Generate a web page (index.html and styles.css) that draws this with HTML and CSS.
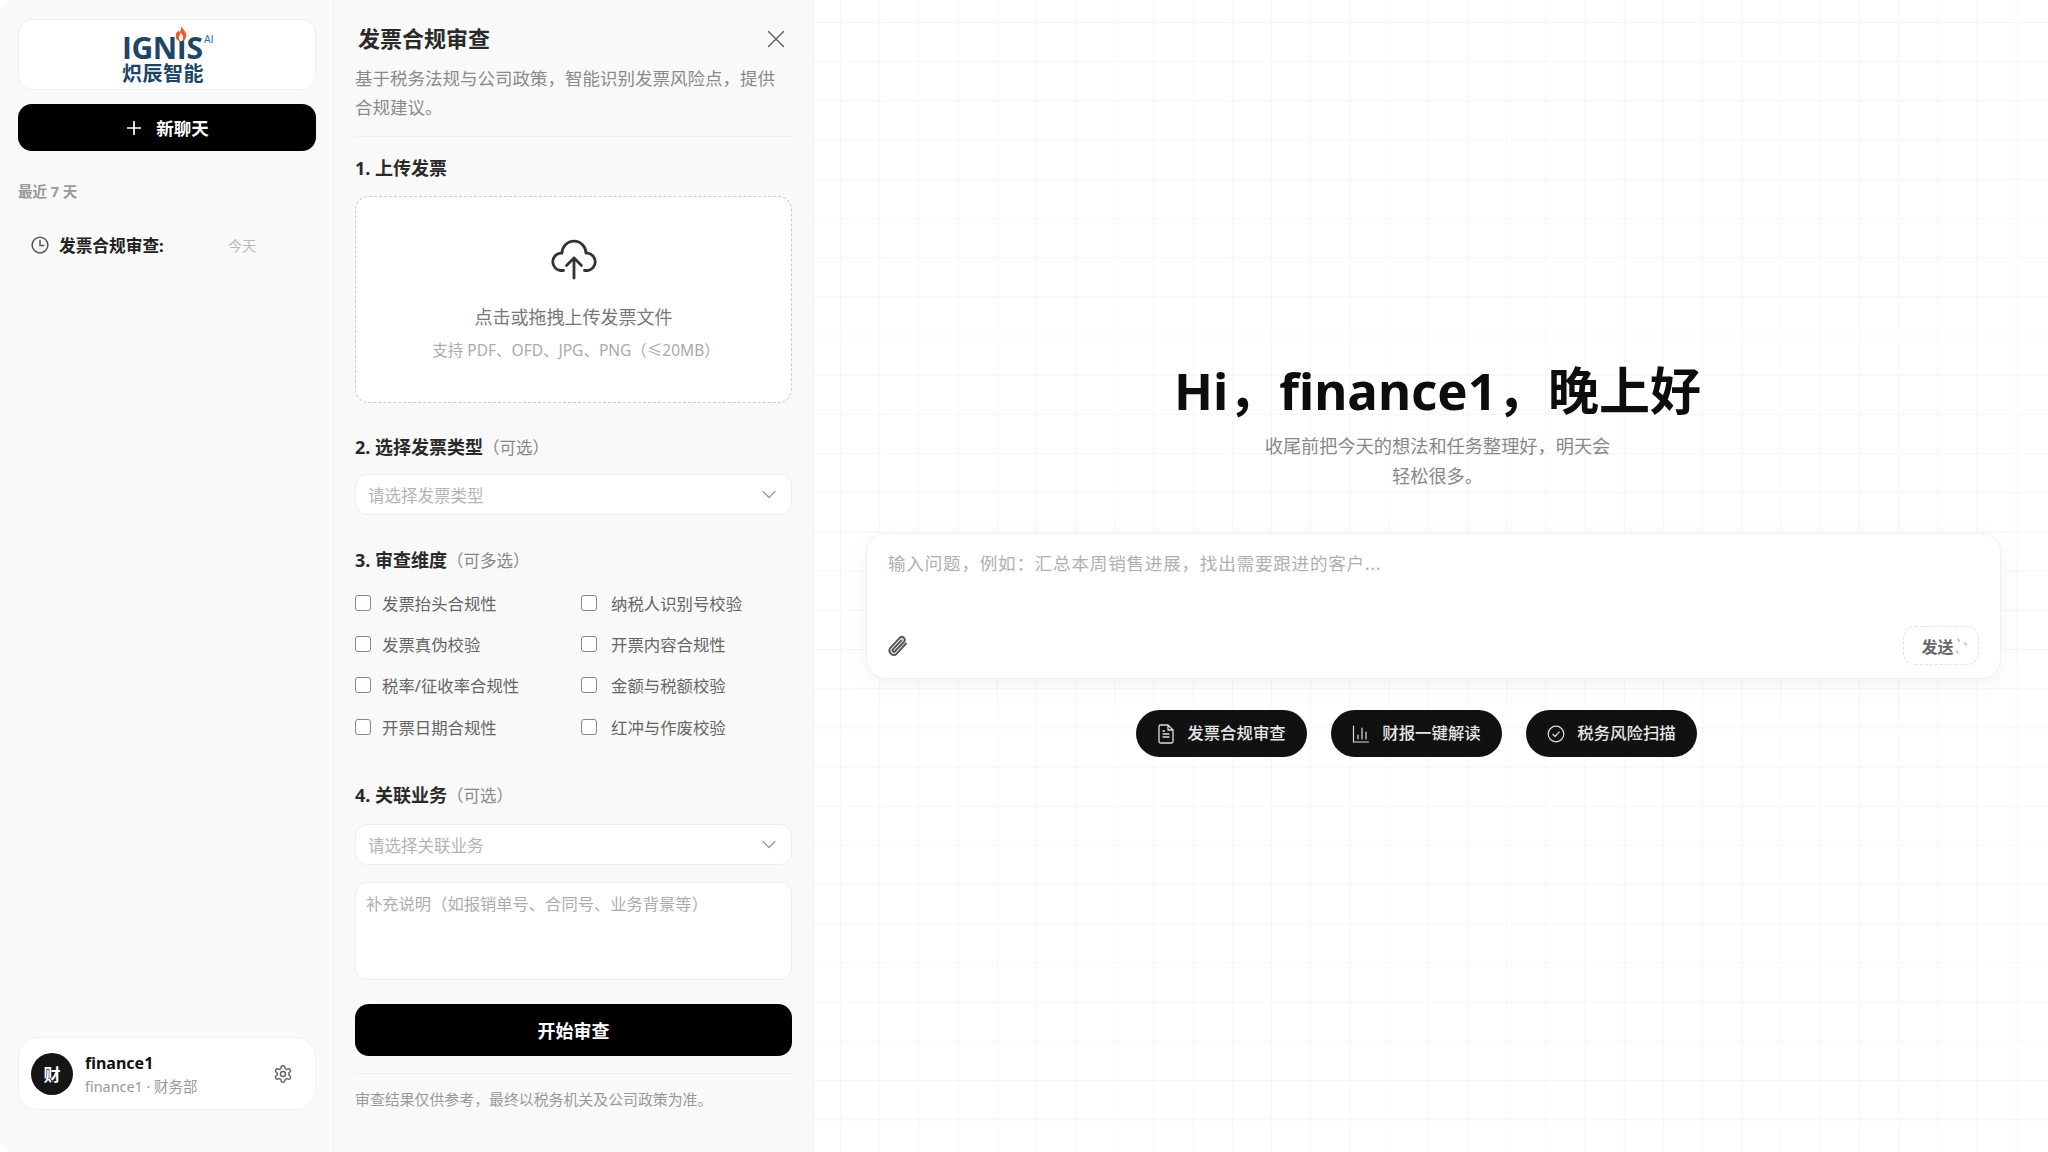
FILE: index.html
```html
<!DOCTYPE html>
<html lang="zh-CN">
<head>
    <meta charset="UTF-8">
    <title>IGNIS 炽辰智能</title>
    <link rel="stylesheet" href="styles.css">
</head>
<body>

    <aside class="sidebar">
        <div class="logo-card">
            <div class="logo">
                <div class="logo-en">IGNIS<span class="logo-ai">AI</span></div>
                <svg class="logo-flame" viewBox="0 0 14 20"><path fill="#ee5a24" d="M7 0c1 3 5 5 6 9 1 5-2 9-6 9S0 15 1 10c.5-2 2-3 2.500-5 1 1 1.500 2 1.500 3C6.500 6 7.500 3 7 0z"/><path fill="#fff" d="M7 8c1 2 2.500 3 2.500 5.500S8.200 18 7 18s-2.500-2-2.500-4.500S6 10 7 8z"/></svg>
                <div class="logo-cn">炽辰智能</div>
            </div>
        </div>
        <button class="new-chat">
            <svg width="18" height="18" viewBox="0 0 18 18" fill="none" stroke="#fff" stroke-width="1.700"><path d="M9 2v14M2 9h14"/></svg>
            <span>新聊天</span>
        </button>
        <div class="recent-label">最近 7 天</div>
        <div class="history-item">
            <svg width="18" height="18" viewBox="0 0 24 24" fill="none" stroke="#555" stroke-width="2" stroke-linecap="round"><circle cx="12" cy="12" r="10.500"/><path d="M12 6v6.500h5"/></svg>
            <span class="history-title">发票合规审查:</span>
            <span class="history-time">今天</span>
        </div>
        <div class="user-card">
            <div class="avatar">财</div>
            <div class="user-info">
                <div class="user-name">finance1</div>
                <div class="user-dept">finance1 · 财务部</div>
            </div>
            <svg width="20" height="20" viewBox="0 0 24 24" fill="none" stroke="#666" stroke-width="1.800" stroke-linecap="round" stroke-linejoin="round"><path d="M12.220 2h-.44a2 2 0 0 0-2 2v.18a2 2 0 0 1-1 1.730l-.43.25a2 2 0 0 1-2 0l-.15-.08a2 2 0 0 0-2.730.73l-.22.38a2 2 0 0 0 .73 2.730l.15.1a2 2 0 0 1 1 1.720v.51a2 2 0 0 1-1 1.740l-.15.09a2 2 0 0 0-.73 2.730l.22.38a2 2 0 0 0 2.730.73l.15-.08a2 2 0 0 1 2 0l.43.25a2 2 0 0 1 1 1.730V20a2 2 0 0 0 2 2h.44a2 2 0 0 0 2-2v-.18a2 2 0 0 1 1-1.730l.43-.25a2 2 0 0 1 2 0l.15.08a2 2 0 0 0 2.730-.73l.22-.39a2 2 0 0 0-.73-2.730l-.15-.08a2 2 0 0 1-1-1.740v-.5a2 2 0 0 1 1-1.740l.15-.09a2 2 0 0 0 .73-2.730l-.22-.38a2 2 0 0 0-2.730-.73l-.15.08a2 2 0 0 1-2 0l-.43-.25a2 2 0 0 1-1-1.730V4a2 2 0 0 0-2-2z"/><circle cx="12" cy="12" r="3"/></svg>
        </div>
    </aside>

    <section class="panel">
        <div class="panel-head">
            <h2>发票合规审查</h2>
            <svg width="18" height="18" viewBox="0 0 18 18" fill="none" stroke="#666" stroke-width="1.500" stroke-linecap="round"><path d="M1.500 1.500l15 15M16.500 1.500l-15 15"/></svg>
        </div>
        <p class="panel-desc">基于税务法规与公司政策，智能识别发票风险点，提供合规建议。</p>
        <div class="divider"></div>

        <div class="field-label first">1. 上传发票</div>
        <div class="upload-box">
            <svg width="48" height="42" viewBox="0 0 48 42" fill="none" stroke="#333" stroke-width="2.800" stroke-linecap="round" stroke-linejoin="round"><path d="M13.500 32.500H10.500A8.700 8.700 0 0 1 10.500 15.200H12A11.900 11.900 0 0 1 36 15.200H37.500A8.700 8.700 0 0 1 37.500 32.500H34.500"/><path d="M24 40V20M16.500 27.500L24 20l7.500 7.500"/></svg>
            <div class="upload-title">点击或拖拽上传发票文件</div>
            <div class="upload-hint">支持 PDF、OFD、JPG、PNG（≤20MB）</div>
        </div>

        <div class="field-label">2. 选择发票类型<span class="optional">（可选）</span></div>
        <div class="select">
            <span>请选择发票类型</span>
            <svg width="14" height="9" viewBox="0 0 14 9" fill="none" stroke="#999" stroke-width="1.300" stroke-linecap="round" stroke-linejoin="round"><path d="M1 1.500l6 6 6-6"/></svg>
        </div>

        <div class="field-label">3. 审查维度<span class="optional">（可多选）</span></div>
        <div class="check-grid">
            <label class="check"><input type="checkbox">发票抬头合规性</label>
            <label class="check"><input type="checkbox">纳税人识别号校验</label>
            <label class="check"><input type="checkbox">发票真伪校验</label>
            <label class="check"><input type="checkbox">开票内容合规性</label>
            <label class="check"><input type="checkbox">税率/征收率合规性</label>
            <label class="check"><input type="checkbox">金额与税额校验</label>
            <label class="check"><input type="checkbox">开票日期合规性</label>
            <label class="check"><input type="checkbox">红冲与作废校验</label>
        </div>

        <div class="field-label">4. 关联业务<span class="optional">（可选）</span></div>
        <div class="select">
            <span>请选择关联业务</span>
            <svg width="14" height="9" viewBox="0 0 14 9" fill="none" stroke="#999" stroke-width="1.300" stroke-linecap="round" stroke-linejoin="round"><path d="M1 1.500l6 6 6-6"/></svg>
        </div>
        <div class="note-box">补充说明（如报销单号、合同号、业务背景等）</div>
        <button class="start-btn">开始审查</button>
        <div class="divider bottom"></div>
        <p class="panel-foot">审查结果仅供参考，最终以税务机关及公司政策为准。</p>
    </section>

    <main class="main">
        <h1>Hi，finance1，晚上好</h1>
        <p class="subtitle">收尾前把今天的想法和任务整理好，明天会<br>轻松很多。</p>
        <div class="composer">
            <div class="composer-text">输入问题，例如：汇总本周销售进展，找出需要跟进的客户...</div>
            <div class="composer-bar">
                <svg width="24" height="24" viewBox="0 0 24 24" fill="none" stroke="#555" stroke-width="2" stroke-linecap="round" stroke-linejoin="round"><path d="M20 9.500l-9.300 10.200a4.300 4.300 0 0 1-6.300-5.800L14 3.600a2.900 2.900 0 0 1 4.200 3.900L8.900 17.300a1.400 1.400 0 0 1-2.100-1.900l8.600-9"/></svg>
                <button class="send-btn">发送<svg width="14" height="18" viewBox="0 0 14 18" fill="none" stroke="#bbb" stroke-width="1.500" stroke-linecap="round"><path d="M3 2l1.500 2M9.500 6l2 2M2 14l1 2"/></svg></button>
            </div>
        </div>
        <div class="chips">
            <button class="chip">
                <svg width="18" height="20" viewBox="0 0 18 20" fill="none" stroke="#ddd" stroke-width="1.300" stroke-linecap="round" stroke-linejoin="round"><path d="M11 1H3.500A1.500 1.500 0 0 0 2 2.500v15A1.500 1.500 0 0 0 3.500 19h11a1.500 1.500 0 0 0 1.500-1.500V6zM11 1v5h5M6 10h6M6 13h6M6 7h1.500"/></svg>
                <span class="chip-text">发票合规审查</span>
            </button>
            <button class="chip">
                <svg width="18" height="20" viewBox="0 0 18 20" fill="none" stroke="#ddd" stroke-width="1.200" stroke-linecap="round"><path d="M1.500 2v16h15M6 15v-4M10 15V4M14 15V8"/></svg>
                <span class="chip-text">财报一键解读</span>
            </button>
            <button class="chip">
                <svg width="18" height="20" viewBox="0 0 18 20" fill="none" stroke="#ddd" stroke-width="1.200" stroke-linecap="round" stroke-linejoin="round"><circle cx="9" cy="10" r="7.800"/><path d="M5.800 10.300l2.300 2.200 4.200-4.600"/></svg>
                <span class="chip-text">税务风险扫描</span>
            </button>
        </div>
    </main>

</body>
</html>
```

FILE: styles.css
```css
* {
    box-sizing: border-box;
}
body {
    margin: 0;
    height: 1152px;
    width: 2048px;
    overflow: hidden;
    display: flex;
    background: #fff;
    color: #111;
    font-family: "Noto Sans", "Noto Sans CJK SC", sans-serif;
}
h1, h2, p {
    margin: 0;
}
button {
    font-family: inherit;
    border: none;
    cursor: pointer;
}

/* sidebar */
.sidebar {
    width: 334px;
    height: 100%;
    padding: 19px 17px 42px 18px;
    display: flex;
    flex-direction: column;
    background: #f9f9f9;
    border-right: 1px solid #f1f1f1;
    border-radius: 14px 0 0 14px;
}
.logo-card {
    height: 71px;
    display: flex;
    align-items: center;
    justify-content: center;
    background: #fff;
    border: 1px solid #f0f0f0;
    border-radius: 14px;
}
.logo {
    position: relative;
    width: 82px;
    margin: 10px 8px 0 0;
    color: #1d4568;
}
.logo-en {
    font-family: "Open Sans", sans-serif;
    font-size: 30px;
    font-weight: 700;
    line-height: 29px;
    letter-spacing: -.4px;
    position: relative;
}
.logo-ai {
    position: absolute;
    left: 82px;
    top: 1px;
    font-family: "Liberation Sans", sans-serif;
    font-size: 10px;
    font-weight: 400;
    line-height: 12px;
    letter-spacing: 0;
    color: #2d6ea3;
}
.logo-flame {
    position: absolute;
    left: 53px;
    top: -7px;
    width: 12px;
    height: 17px;
}
.logo-cn {
    font-size: 20px;
    font-weight: 700;
    line-height: 24px;
    white-space: nowrap;
    letter-spacing: .5px;
}
.new-chat {
    margin-top: 14px;
    height: 47px;
    display: flex;
    align-items: center;
    justify-content: center;
    gap: 13px;
    background: #000;
    color: #fff;
    font-size: 17.500px;
    font-weight: 700;
    border-radius: 14px;
}
.recent-label {
    margin-top: 29px;
    font-size: 14.500px;
    font-weight: 700;
    line-height: 22px;
    color: #9a9a9a;
}
.history-item {
    margin-top: 29px;
    padding-left: 13px;
    height: 28px;
    display: flex;
    align-items: center;
}
.history-title {
    margin-left: 10px;
    width: 169px;
    font-size: 16.700px;
    font-weight: 700;
    color: #222;
}
.history-time {
    font-size: 14px;
    color: #b8b8b8;
}
.user-card {
    margin-top: auto;
    height: 73px;
    padding: 0 22px 0 12px;
    display: flex;
    align-items: center;
    background: #fff;
    border: 1px solid #f2f2f2;
    border-radius: 20px;
}
.avatar {
    width: 42px;
    height: 42px;
    display: flex;
    align-items: center;
    justify-content: center;
    background: #151515;
    color: #fff;
    font-size: 17px;
    font-weight: 700;
    border-radius: 50%;
}
.user-info {
    flex: 1;
    margin-left: 12px;
}
.user-name {
    font-size: 16px;
    font-weight: 700;
    line-height: 24px;
    margin-top: 2px;
}
.user-dept {
    font-size: 14.400px;
    line-height: 24px;
    color: #999;
}

/* review panel */
.panel {
    width: 480px;
    height: 100%;
    padding: 24px 21px 0;
    background: #f9f9f9;
    border-right: 1px solid #f1f1f1;
}
.panel-head {
    height: 27px;
    padding: 0 7px 0 3px;
    display: flex;
    align-items: center;
    justify-content: space-between;
}
.panel-head h2 {
    margin-bottom: 2px;
    font-size: 22px;
    font-weight: 700;
    color: #2a2a2a;
}
.panel-head svg {
    margin-top: 2px;
}
.panel-desc {
    margin-top: 13px;
    font-size: 17.500px;
    line-height: 29px;
    color: #8a8a8a;
}
.divider {
    margin-top: 14px;
    height: 1px;
    background: #efefef;
}
.divider.bottom {
    margin-top: 17px;
}
.field-label {
    margin-top: 32px;
    font-size: 18px;
    font-weight: 700;
    line-height: 24px;
    color: #2a2a2a;
}
.field-label.first {
    margin-top: 19px;
}
.select + .field-label {
    margin-top: 33px;
}
.check-grid + .field-label {
    margin-top: 36px;
}
.optional {
    font-size: 16.500px;
    font-weight: 400;
    color: #888;
}
.upload-box {
    margin-top: 16px;
    height: 207px;
    padding-top: 41px;
    display: flex;
    flex-direction: column;
    align-items: center;
    background: #fff;
    border: 1px dashed #ccc;
    border-radius: 14px;
}
.upload-title {
    margin-top: 24px;
    font-size: 18px;
    line-height: 26px;
    color: #777;
}
.upload-hint {
    margin-top: 9px;
    padding-left: 5px;
    font-size: 15.500px;
    line-height: 22px;
    color: #aaa;
}
.select {
    margin-top: 14px;
    height: 41px;
    padding: 0 15px 0 12px;
    display: flex;
    align-items: center;
    justify-content: space-between;
    background: #fff;
    border: 1px solid #eee;
    border-radius: 12px;
    font-size: 16.500px;
    color: #b4b4b4;
}
.check-grid + .field-label + .select {
    margin-top: 16px;
}
.check-grid {
    margin-top: 9px;
    display: grid;
    grid-template-columns: 226px 1fr;
    grid-auto-rows: 41.300px;
}
.check {
    display: flex;
    align-items: center;
    font-size: 16.400px;
    color: #666;
    white-space: nowrap;
}
.check input {
    appearance: none;
    margin: 0 11px 0 0;
    width: 16px;
    height: 16px;
    background: #fff;
    border: 1px solid #888;
    border-radius: 3px;
}
.check:nth-child(even) input {
    margin-right: 14px;
}
.note-box {
    margin-top: 17px;
    height: 98px;
    padding: 10px 10px;
    background: #fff;
    border: 1px solid #eee;
    border-radius: 12px;
    font-size: 16.300px;
    line-height: 22px;
    color: #adadad;
}
.start-btn {
    display: block;
    margin-top: 24px;
    width: 100%;
    height: 52px;
    background: #000;
    color: #fff;
    font-size: 18px;
    font-weight: 700;
    border-radius: 14px;
}
.panel-foot {
    margin-top: 14px;
    font-size: 14.900px;
    line-height: 22px;
    color: #999;
}

/* main area with the grid paper */
.main {
    flex: 1;
    height: 100%;
    padding: 353px 47px 0 52px;
    display: flex;
    flex-direction: column;
    align-items: center;
    background-color: #fff;
    background-image:
        linear-gradient(#f6f6f6 1px, transparent 1px),
        linear-gradient(90deg, #f6f6f6 1px, transparent 1px);
    background-size: 39.200px 39.200px;
    background-position: 26px 22px;
}
.main h1 {
    font-size: 51px;
    font-weight: 700;
    line-height: 74px;
    color: #0d0d0d;
    white-space: nowrap;
    transform: translateX(4px);
}
.subtitle {
    margin-top: 4px;
    font-size: 18.200px;
    line-height: 30px;
    color: #888;
    text-align: center;
    transform: translateX(4px);
}
.composer {
    margin-top: 42px;
    width: 100%;
    height: 146px;
    padding: 17px 21px 13px 19px;
    display: flex;
    flex-direction: column;
    justify-content: space-between;
    background: #fff;
    border: 1px solid #f1f1f1;
    border-radius: 20px;
    box-shadow: 0 6px 24px rgba(0, 0, 0, .05);
}
.composer-text {
    padding-left: 2px;
    font-size: 17.600px;
    letter-spacing: .75px;
    line-height: 24px;
    color: #b0b0b0;
}
.composer-bar {
    display: flex;
    align-items: center;
    justify-content: space-between;
}
.send-btn {
    width: 76px;
    height: 39px;
    display: flex;
    align-items: center;
    justify-content: center;
    gap: 1px;
    background: #fff;
    color: #666;
    font-size: 16px;
    font-weight: 700;
    border: 1px dashed #e4e4e4;
    border-radius: 12px;
    padding: 0 0 0 8px;
}
.chips {
    margin-top: 31px;
    margin-right: 34px;
    display: flex;
    gap: 24px;
}
.chip {
    width: 171px;
    height: 47px;
    display: flex;
    align-items: center;
    justify-content: center;
    gap: 12px;
    background: #111;
    color: #e6e6e6;
    font-size: 16.400px;
    font-weight: 500;
    border-radius: 24px;
}
.chip-text {
    margin-bottom: 3px;
}
```
